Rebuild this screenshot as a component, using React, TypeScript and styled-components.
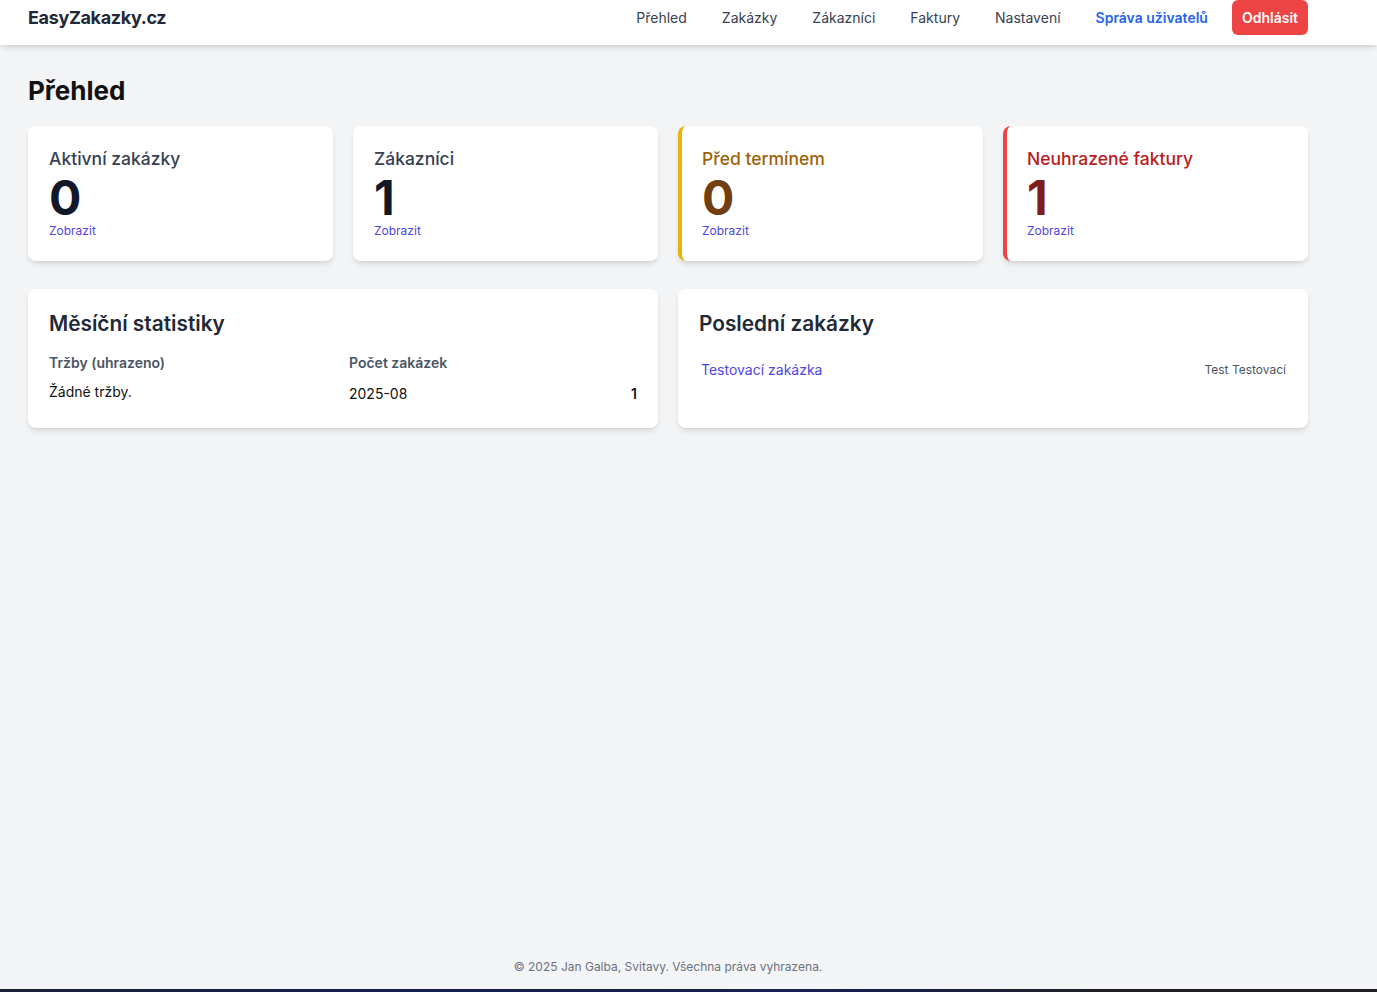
import React from "react";
import styled, { createGlobalStyle } from "styled-components";

const GlobalStyle = createGlobalStyle`
  * { box-sizing: border-box; }
  html, body { margin: 0; padding: 0; }
  body {
    background: #f3f4f6;
    font-family: Inter, "Noto Sans", "Liberation Sans", sans-serif;
    color: #111827;
  }
  a { text-decoration: none; }
`;

const Page = styled.div`
  min-height: 100vh;
  display: flex;
  flex-direction: column;
`;

const Header = styled.header`
  background: #ffffff;
  height: 45px;
  box-shadow: 0 4px 6px -1px rgba(0, 0, 0, 0.1), 0 2px 4px -2px rgba(0, 0, 0, 0.1);
  position: relative;
  z-index: 1;
`;

const HeaderInner = styled.div`
  width: 1280px;
  margin-left: 28px;
  height: 36px;
  display: flex;
  align-items: center;
  justify-content: space-between;
`;

const Logo = styled.a`
  font-size: 18px;
  line-height: 28px;
  font-weight: 700;
  letter-spacing: -0.35px;
  color: #1f2937;
`;

const Nav = styled.nav`
  display: flex;
  align-items: center;
  gap: 24px;
  height: 100%;
`;

const NavLinks = styled.div`
  display: flex;
  align-items: center;
  gap: 35px;
`;

const NavLink = styled.a<{ $accent?: boolean }>`
  font-size: 14px;
  line-height: 20px;
  color: ${(p) => (p.$accent ? "#2563eb" : "#374151")};
  font-weight: ${(p) => (p.$accent ? 600 : 400)};
`;

const LogoutButton = styled.button`
  align-self: flex-start;
  height: 35px;
  padding: 0 10px;
  border: none;
  border-radius: 6px;
  background: #ef4444;
  color: #ffffff;
  font-family: inherit;
  font-size: 14px;
  font-weight: 600;
  cursor: pointer;
`;

const Main = styled.main`
  flex: 1;
  width: 1280px;
  margin-left: 28px;
  padding-top: 30px;
`;

const PageTitle = styled.h1`
  margin: 0 0 19px;
  font-size: 26px;
  line-height: 32px;
  font-weight: 700;
  color: #111111;
`;

const StatGrid = styled.div`
  display: grid;
  grid-template-columns: repeat(4, 1fr);
  gap: 20px;
  margin-bottom: 28px;
`;

const Card = styled.div<{ $border?: string }>`
  background: #ffffff;
  border-radius: 8px;
  box-shadow: 0 4px 6px -1px rgba(0, 0, 0, 0.1), 0 2px 4px -2px rgba(0, 0, 0, 0.1);
  border-left: ${(p) => (p.$border ? `4px solid ${p.$border}` : "none")};
`;

const StatCard = styled(Card)`
  padding: 19px 21px 22px ${(p) => (p.$border ? "20px" : "21px")};
`;

const PanelCard = styled(Card)`
  padding: 21px 21px 22px;
`;

const StatTitle = styled.h2<{ $color?: string }>`
  margin: 0;
  font-size: 17.5px;
  line-height: 28px;
  font-weight: 500;
  color: ${(p) => p.$color || "#374151"};
`;

const StatValue = styled.div<{ $color?: string }>`
  margin-top: 1px;
  font-size: 48px;
  line-height: 1;
  font-weight: 700;
  letter-spacing: -1px;
  color: ${(p) => p.$color || "#111827"};
`;

const SmallLink = styled.a`
  display: block;
  margin-top: 1px;
  font-size: 12px;
  line-height: 16px;
  color: #4f46e5;
`;

const BottomGrid = styled.div`
  display: grid;
  grid-template-columns: repeat(2, 1fr);
  gap: 20px;
`;

const SectionTitle = styled.h2<{ $gap: number }>`
  margin: 0 0 ${(p) => p.$gap}px;
  font-size: 20.8px;
  line-height: 28px;
  font-weight: 600;
  color: #1f2937;
`;

const TwoCols = styled.div`
  display: grid;
  grid-template-columns: 1fr 1fr;
  gap: 12px;
`;

const ColHeading = styled.h3`
  margin: 0 0 9px;
  font-size: 14px;
  line-height: 20px;
  font-weight: 600;
  color: #4b5563;
`;

const PlainText = styled.p`
  margin: 0;
  font-size: 14px;
  line-height: 20px;
  color: #111111;
`;

const List = styled.ul`
  list-style: none;
  margin: 0;
  padding: 0;
`;

const StatRow = styled.li`
  display: flex;
  justify-content: space-between;
  align-items: center;
  padding: 2px 0;
  font-size: 14px;
  line-height: 20px;
  color: #111111;
`;

const StatCount = styled.span`
  font-weight: 600;
`;

const OrderRow = styled.li`
  display: flex;
  justify-content: space-between;
  align-items: center;
  padding: 6px 1px 6px 2px;
`;

const OrderLink = styled.a`
  font-size: 14px;
  line-height: 20px;
  color: #4f46e5;
`;

const OrderCustomer = styled.span`
  font-size: 12px;
  line-height: 16px;
  color: #4b5563;
`;

const Footer = styled.footer`
  width: 1280px;
  margin-left: 28px;
  padding-bottom: 14px;
  text-align: center;
  font-size: 12px;
  line-height: 16px;
  color: #6b7280;
`;

const BottomStrip = styled.div`
  height: 3px;
  background: linear-gradient(90deg, #1b2135 0%, #16204f 30%, #172050 60%, #1f1f24 80%, #202022 100%);
`;

const stats = [
  { title: "Aktivní zakázky", value: "0" },
  { title: "Zákazníci", value: "1" },
  { title: "Před termínem", value: "0", border: "#eab308", titleColor: "#a16207", valueColor: "#713f12" },
  { title: "Neuhrazené faktury", value: "1", border: "#ef4444", titleColor: "#b91c1c", valueColor: "#7f1d1d" },
];

export default function App() {
  return (
    <>
      <GlobalStyle />
      <Page>
        <Header>
          <HeaderInner>
            <Logo href="#">EasyZakazky.cz</Logo>
            <Nav>
              <NavLinks>
                <NavLink href="#">Přehled</NavLink>
                <NavLink href="#">Zakázky</NavLink>
                <NavLink href="#">Zákazníci</NavLink>
                <NavLink href="#">Faktury</NavLink>
                <NavLink href="#">Nastavení</NavLink>
                <NavLink href="#" $accent>Správa uživatelů</NavLink>
              </NavLinks>
              <LogoutButton>Odhlásit</LogoutButton>
            </Nav>
          </HeaderInner>
        </Header>
        <Main>
          <PageTitle>Přehled</PageTitle>
          <StatGrid>
            {stats.map((s) => (
              <StatCard key={s.title} $border={s.border}>
                <StatTitle $color={s.titleColor}>{s.title}</StatTitle>
                <StatValue $color={s.valueColor}>{s.value}</StatValue>
                <SmallLink href="#">Zobrazit</SmallLink>
              </StatCard>
            ))}
          </StatGrid>
          <BottomGrid>
            <PanelCard>
              <SectionTitle $gap={15}>Měsíční statistiky</SectionTitle>
              <TwoCols>
                <div>
                  <ColHeading>Tržby (uhrazeno)</ColHeading>
                  <PlainText>Žádné tržby.</PlainText>
                </div>
                <div>
                  <ColHeading>Počet zakázek</ColHeading>
                  <List>
                    <StatRow>
                      <span>2025-08</span>
                      <StatCount>1</StatCount>
                    </StatRow>
                  </List>
                </div>
              </TwoCols>
            </PanelCard>
            <PanelCard>
              <SectionTitle $gap={16}>Poslední zakázky</SectionTitle>
              <List>
                <OrderRow>
                  <OrderLink href="#">Testovací zakázka</OrderLink>
                  <OrderCustomer>Test Testovací</OrderCustomer>
                </OrderRow>
              </List>
            </PanelCard>
          </BottomGrid>
        </Main>
        <Footer>© 2025 Jan Galba, Svitavy. Všechna práva vyhrazena.</Footer>
        <BottomStrip />
      </Page>
    </>
  );
}
